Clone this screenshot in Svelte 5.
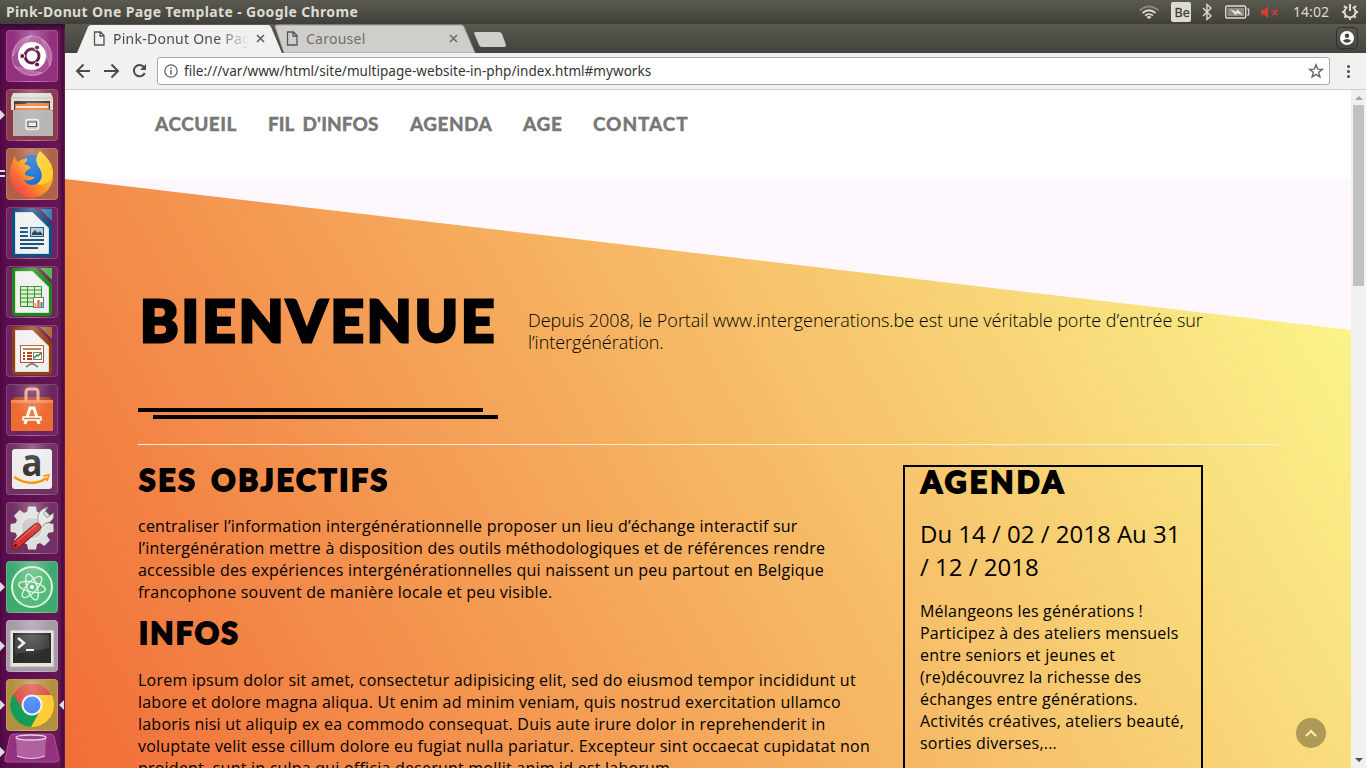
<script>
  const links = [
    { t: 'ACCUEIL', w: 83, s: 0.5 },
    { t: "FIL D'INFOS", w: 112, s: 0.05 },
    { t: 'AGENDA', w: 83, s: 0.45 },
    { t: 'AGE', w: 40, s: 0.6 },
    { t: 'CONTACT', w: 97, s: 0.9 }
  ];
  const apps = [
    { id: 'dash', bg: '#93317e' },
    { id: 'files', bg: '#8c3a4c', run: 1 },
    { id: 'firefox', bg: '#ae6248', run: 2 },
    { id: 'writer', bg: '#6b2560' },
    { id: 'calc', bg: '#6b2560' },
    { id: 'impress', bg: '#6b2560' },
    { id: 'software', bg: '#6b2560' },
    { id: 'amazon', bg: '#733062' },
    { id: 'settings', bg: '#733062' },
    { id: 'atom', bg: '#3faa70', run: 1 },
    { id: 'term', bg: '#a898a8', run: 1 },
    { id: 'chrome', bg: '#b39040', run: 1, active: true }
  ];
  const docColor = { writer: ['#0b5283', '#3285b5'], calc: ['#1c8a12', '#55b83c'], impress: ['#973d0c', '#b96a35'] };
  const teeth = [0, 45, 90, 135, 180, 225, 270, 315];
</script>

<div class="screen">
  <header class="panel">
    <span class="wtitle">Pink-Donut One Page Template - Google Chrome</span>
    <svg class="tray" width="250" height="24" viewBox="0 0 250 24">
      <g fill="none" stroke="#dfdbd2" stroke-width="1.7">
        <path d="M23.5 10.5Q33 2.500 42.500 10.500" stroke="#8b8983" /><path d="M26.500 13Q33 7.500 39.500 13" /><path d="M29 15.700Q33 12.500 37 15.700" />
      </g>
      <path d="M30.500 17Q33 15 35.500 17L33 19Z" fill="#dfdbd2" />
      <rect x="55" y="2" width="20" height="20" rx="2" fill="#dfdbd2" />
      <text x="58.500" y="17" font-size="12.500" font-family="Noto Sans" fill="#3c3b37" stroke="#3c3b37" stroke-width=".3">Be</text>
      <path d="M87 8l8 8-4 3.500v-15l4 3.500-8 8" fill="none" stroke="#dfdbd2" stroke-width="1.400" />
      <rect x="109.700" y="6" width="20" height="12" rx="1.500" fill="none" stroke="#dfdbd2" stroke-width="1.400" />
      <path d="M131 9h1.700v6H131" fill="none" stroke="#dfdbd2" stroke-width="1.200" />
      <rect x="111.500" y="8" width="16.500" height="8" fill="#8b8983" />
      <path d="M114 9l6.500 3 .5-3 6 6-6.500-2-.5 2.500z" fill="#efede8" />
      <path d="M145 10h3l4-4v12l-4-3.500h-3z" fill="#df382c" /><path d="M156.500 10l5 5m0-5l-5 5" stroke="#df382c" stroke-width="1.700" />
      <text x="177" y="17" font-size="14" font-family="Noto Sans" fill="#dfdbd2" textLength="36">14:02</text>
      <g stroke="#dfdbd2" fill="none" stroke-width="2"><path d="M231.300 7a5.600 5.600 0 1 0 5.400 0M234 4v7M226 12h2.500M239.500 12h2.500M228 6l2.200 2.200M240 6l-2.200 2.200M228.300 17.700l2-2M239.700 17.700l-2-2M234 17.500v2.500" /></g>
    </svg>
  </header>

  <div class="desktop">
    <aside class="launcher">
      {#each apps as a}
        <div class="slot">
          {#if a.run === 1}<i class="arrow"></i>{/if}
          {#if a.run === 2}<i class="bars"></i>{/if}
          <div class="tile" style="background-color:{a.bg}">
            <svg width="52" height="52" viewBox="0 0 52 52">
              {#if a.id === 'dash'}
                <g fill="#e9b6dc" fill-opacity=".22" stroke="#f0cfe8" stroke-opacity=".45" stroke-width=".8">
                  {#each [0, 120, 240] as r}<path transform="rotate({r} 26 26)" d="M7 26A19 19 0 0 1 40 12Q46 20 44 36Q40 20 30 13Q17 8 7 26Z" />{/each}
                </g>
                <circle cx="26" cy="26" r="14" fill="#fff" />
                <circle cx="26" cy="26" r="7" fill="none" stroke="#5c1045" stroke-width="3" />
                <g fill="#5c1045" stroke="#fff"><circle cx="16.300" cy="26" r="2.500" /><circle cx="31" cy="17.500" r="2.500" /><circle cx="31" cy="34.500" r="2.500" /></g>
              {:else if a.id === 'files'}
                <path d="M5 9l2-5h38l2 5v12H5z" fill="#dededc" /><path d="M5 9h42" stroke="#bbb" /><rect x="8" y="12" width="36" height="9" fill="#423c37" />
                <path d="M9 15h10l2-1h22v7H9z" fill="#e88245" /><path d="M10 18h32" stroke="#fff" stroke-width="1.500" />
                <path d="M7 21h38l2 1v25H7z" fill="#b5b5b4" /><rect x="20" y="30.500" width="12.500" height="10" rx="2" fill="#c4c4c4" stroke="#f0f0f0" stroke-width="1.500" /><rect x="22" y="33" width="8.500" height="4.500" fill="#eee" stroke="#555" />
              {:else if a.id === 'firefox'}
                <defs><linearGradient id="fo" x1="1" x2="0" y1="0" y2="1"><stop offset="0" stop-color="#ffec3d" /><stop offset=".5" stop-color="#ff9a20" /><stop offset="1" stop-color="#f0245a" /></linearGradient></defs>
                <circle cx="27" cy="25" r="18" fill="#166fd3" />
                <path d="M9 8Q4 16 4 27A21.500 21.500 0 0 0 47 29Q48 18 41 11Q37 8 34 3Q28 10 32 17Q37 22 38 28Q35 36 27 37Q20 37 18 32Q25 34 29 29Q24 29 19 27Q18 23 25 20Q23 17 18 16Q22 13 21 10Q15 11 12 14Q9 12 9 8Z" fill="url(#fo)" />
                <path d="M34 3Q28 11 32 18Q40 29 31 36Q40 39 45 30Q51 17 34 3Z" fill="#ffcf32" />
              {:else if docColor[a.id]}
                <path d="M7.500 2H30l16 16v28q0 4-4 4H10q-4 0-4-4V5q0-3 1.500-3z" fill={docColor[a.id][0]} />
                <path d="M34 2h12v12z" fill={docColor[a.id][1]} /><path d="M9.500 5.500h17L42.500 21v25.500h-33z" fill="#f0f0f0" stroke="#d5dce0" />
                {#if a.id === 'writer'}
                  <path d="M14 21h8m-8 4h8m-8 4h8m-8 4h24m-24 4h24m-24 4h18" stroke="#17517d" stroke-width="2" /><rect x="24.500" y="20.500" width="13" height="9" fill="#a5d2eb" stroke="#17517d" /><path d="M26 28v-2l3-3 3 3 2-2 3 4z" fill="#333" />
                {:else if a.id === 'calc'}
                  <path d="M14.500 20.500h21v20h-21zM14.500 24h21m-21 4h21m-21 4h21m-21 4h21M21.500 20.500v20m7-20v20" fill="#dcefd7" stroke="#249017" /><rect x="27.500" y="31.500" width="10" height="10" fill="#fff" stroke="#777" /><path d="M29.500 41v-4" stroke="#f2b01e" stroke-width="2" /><path d="M32.500 41v-7" stroke="#d9571c" stroke-width="2" /><path d="M35.500 41v-5" stroke="#2786c8" stroke-width="2" />
                {:else}
                  <rect x="14.500" y="20.500" width="23" height="17" fill="#fff" stroke="#b7501d" /><path d="M17 23h18v2H17z" fill="#d26f3b" /><path d="M17 28h2m-2 3h2m-2 3h2m2-6h5m-5 3h5m-5 3h5" stroke="#a83d14" stroke-width="2" /><rect x="27.500" y="27.500" width="8" height="7" fill="#fff" stroke="#777" /><path d="M28 33l3-3 1 1 3-3" stroke="#278b22" fill="none" stroke-width="1.500" /><path d="M26 37v3m0-2l-6 4m6-4l6 4" stroke="#888" stroke-width="2" />
                {/if}
              {:else if a.id === 'software'}
                <path d="M5 17h42v30H5z" fill="#ef6c31" /><path d="M5 17l3-4h36l3 4" fill="#b8481f" /><path d="M5 16h42v3H5z" fill="#f58a55" /><path d="M20 17V8q0-3 3-3h6q3 0 3 3v9" fill="none" stroke="#f1a583" stroke-width="3" />
                <path d="M19 40l5-16h4l5 16" fill="none" stroke="#fff" stroke-width="3" /><path d="M17 33h18v3H17z" fill="#ef6c31" stroke="#fff" stroke-width="1.500" />
              {:else if a.id === 'amazon'}
                <rect x="6" y="6" width="40" height="40" rx="3" fill="#ededed" />
                <text x="15.500" y="32.500" font-size="38" font-weight="bold" font-family="Open Sans" fill="#2b2b2b" textLength="21" lengthAdjust="spacingAndGlyphs">a</text>
                <path d="M8 34Q25 45 41 35" fill="none" stroke="#f79400" stroke-width="2.200" /><path d="M37 33l6-1-2 6" fill="none" stroke="#f79400" stroke-width="1.500" />
              {:else if a.id === 'settings'}
                {#each teeth as r}<path transform="rotate({r} 26 26)" d="M22 4.500h8l1.500 8h-11z" fill="#dedede" />{/each}
                <circle cx="26" cy="26" r="17" fill="#e0e0e0" /><circle cx="26" cy="26" r="11" fill="#c9c9c9" stroke="#f5f5f5" />
                <path d="M33 23Q29 12 37 7L42 5 37.500 11.500 41 15.500 47.500 11Q49 20 39 21.500L35 26Z" fill="#e8e8e5" stroke="#888" /><path d="M31 25L10 43" stroke="#8e1717" stroke-width="8.500" stroke-linecap="round" /><path d="M31 25L10 43" stroke="#d33232" stroke-width="6.500" stroke-linecap="round" /><path d="M30 23.500L11 39.500" stroke="#eb7770" /><circle cx="9.500" cy="43.500" r="1.500" fill="#561111" />
              {:else if a.id === 'atom'}
                <circle cx="26" cy="26" r="20" fill="#55bc79" stroke="#ddf4df" stroke-width="2" /><g fill="none" stroke="#e5f7e8" stroke-width="1.300"><ellipse cx="26" cy="26" rx="13.500" ry="5" transform="rotate(12 26 26)" /><ellipse cx="26" cy="26" rx="13.500" ry="5" transform="rotate(72 26 26)" /><ellipse cx="26" cy="26" rx="13.500" ry="5" transform="rotate(132 26 26)" /></g><circle cx="26" cy="26" r="2" fill="#fff" />
              {:else if a.id === 'term'}
                <rect x="4" y="10" width="44" height="37" rx="1" fill="#e7e7e2" stroke="#aaa" /><rect x="7" y="13" width="38" height="30" fill="#2d2d2d" /><path d="M9 15h34v13L9 34z" fill="#444" /><path d="M12 18l6 5-6 5" fill="none" stroke="#eee" stroke-width="2.600" /><path d="M20 30h8" stroke="#eee" stroke-width="2" />
              {:else}
                <circle cx="26" cy="26" r="22" fill="#fc3" /><path d="M26 26L7 15A22 22 0 0 0 25 48L34.500 31z" fill="#169b58" /><path d="M7 15A22 22 0 0 1 45.500 16H26L17 31z" fill="#dc5145" /><circle cx="26" cy="26" r="10.500" fill="#f4f4f4" /><circle cx="26" cy="26" r="8.500" fill="#4285f4" />
              {/if}
            </svg>
            <b class="shine"></b>
          </div>
          {#if a.active}<i class="arrow right"></i>{/if}
        </div>
      {/each}
      <div class="trash"><i class="arrow"></i>
        <svg width="56" height="31" viewBox="0 0 56 31"><path d="M9 1h38q2 0 3 2l5 23q0 3-3 3H3q-3 0-2-3L6 3q1-2 3-2z" fill="#93317e" stroke="#a9559a" /><path d="M12 4h30l-1 20q-14 4-28 0z" fill="#ce94bd" fill-opacity=".5" /><ellipse cx="27" cy="4.500" rx="15" ry="2.500" fill="#974484" stroke="#edcfe5" stroke-width="1.300" /><path d="M13 23q14 5 28 0" fill="none" stroke="#ebcde3" /></svg>
      </div>
    </aside>

    <section class="browser">
      <div class="tabs">
        <svg class="tabshape" width="460" height="29" viewBox="0 0 460 29"><path d="M210 2q1-1 3-1h183q2 0 3 2l11 26H219z" fill="#d0cecb" stroke="#a3a19d" /><path d="M12 29L23 3q1-2 3-2h177q2 0 3 2l11 26z" fill="#f2f1ef" /><path d="M410 8h24q2 0 3 2l4 11q0 2-2 2h-22q-2 0-3-2l-5-12z" fill="#d0cecb" /></svg>
        <div class="tab first"><svg width="12" height="15" viewBox="0 0 12 15"><path d="M1.500 1h6l3.500 3.500V14H1.500zM7 1v4h4" fill="none" stroke="#555" stroke-width="1.300" /></svg><span class="fade">Pink-Donut One Page</span><svg class="x" width="9" height="9"><path d="M1 1l7 7m0-7l-7 7" stroke="#5a5a5a" stroke-width="1.500" /></svg></div>
        <div class="tab second"><svg width="12" height="15" viewBox="0 0 12 15"><path d="M1.500 1h6l3.500 3.500V14H1.500zM7 1v4h4" fill="none" stroke="#555" stroke-width="1.300" /></svg><span>Carousel</span><svg class="x" width="9" height="9"><path d="M1 1l7 7m0-7l-7 7" stroke="#6a6a6a" stroke-width="1.500" /></svg></div>
        <div class="user"><svg width="14" height="14"><circle cx="7" cy="7" r="7" fill="#fff" /><circle cx="7" cy="4.700" r="2.200" fill="#454440" /><path d="M2.800 9.700Q7 6.500 11.200 9.700 7 14 2.800 9.700" fill="#454440" /></svg></div>
      </div>
      <div class="toolbar">
        <svg width="88" height="34" viewBox="0 0 88 34" fill="none" stroke="#4c4c4c" stroke-width="2"><path d="M25 17H12M18.500 10.500L12 17l6.500 6.500M39 17h13M46.500 10.500L53 17l-6.500 6.500" /><path d="M79 13a5.700 5.700 0 1 0 .8 6" /><path d="M81 10v6h-6z" fill="#4c4c4c" stroke="none" /></svg>
        <div class="url"><svg width="14" height="14"><circle cx="7" cy="7" r="6.200" fill="none" stroke="#666" stroke-width="1.300" /><path d="M7 6v4.500M7 3.500v1.500" stroke="#666" stroke-width="1.500" /></svg><span>file:///var/www/html/site/multipage-website-in-php/index.html#myworks</span><svg class="star" width="16" height="16" viewBox="0 0 16 16"><path d="M8 1.800l1.700 4.300 4.600.3-3.600 2.900 1.200 4.600L8 11.400l-3.900 2.500 1.200-4.600-3.600-2.900 4.600-.3z" fill="none" stroke="#666" stroke-width="1.400" /></svg></div>
        <div class="dots"><i></i><i></i><i></i></div>
      </div>

      <div class="view">
        <main class="page">
          <nav>{#each links as l}<a href="#top" style="width:{l.w}px;letter-spacing:{l.s}px">{l.t}</a>{/each}</nav>
          <div class="hero">
            <svg class="wash" width="1286" height="589" viewBox="0 0 1286 589">
              <defs><linearGradient id="sun" gradientUnits="userSpaceOnUse" x1="0" y1="560" x2="1172" y2="-102"><stop offset="0" stop-color="#f16f39" /><stop offset=".45" stop-color="#f5ac5d" /><stop offset="1" stop-color="#fbf68c" /></linearGradient></defs>
              <path d="M0 0L1286 151V589H0z" fill="url(#sun)" />
            </svg>
            <div class="content">
              <div class="intro">
                <h1>BIENVENUE</h1>
                <p>Depuis 2008, le Portail www.intergenerations.be est une véritable porte d’entrée sur<br />l’intergénération.</p>
              </div>
              <div class="rules"><i></i><i></i></div>
              <hr />
              <div class="cols">
                <article>
                  <h2 class="obj">SES OBJECTIFS</h2>
                  <p>centraliser l’information intergénérationnelle proposer un lieu d’échange interactif sur<br />l’intergénération mettre à disposition des outils méthodologiques et de références rendre<br />accessible des expériences intergénérationnelles qui naissent un peu partout en Belgique<br />francophone souvent de manière locale et peu visible.</p>
                  <h2 class="inf">INFOS</h2>
                  <p>Lorem ipsum dolor sit amet, consectetur adipisicing elit, sed do eiusmod tempor incididunt ut<br />labore et dolore magna aliqua. Ut enim ad minim veniam, quis nostrud exercitation ullamco<br />laboris nisi ut aliquip ex ea commodo consequat. Duis aute irure dolor in reprehenderit in<br />voluptate velit esse cillum dolore eu fugiat nulla pariatur. Excepteur sint occaecat cupidatat non<br />proident, sunt in culpa qui officia deserunt mollit anim id est laborum.</p>
                </article>
                <div class="agenda">
                  <h2>AGENDA</h2>
                  <h3>Du 14 / 02 / 2018 Au 31<br />/ 12 / 2018</h3>
                  <p>Mélangeons les générations !<br />Participez à des ateliers mensuels<br />entre seniors et jeunes et<br />(re)découvrez la richesse des<br />échanges entre générations.<br />Activités créatives, ateliers beauté,<br />sorties diverses,...</p>
                </div>
              </div>
            </div>
          </div>
          <div class="totop"><svg width="12" height="8"><path d="M1 7l5-5 5 5" fill="none" stroke="#fff0b0" stroke-width="2.200" /></svg></div>
        </main>
        <div class="scroll"><i class="up"></i><b></b><i class="down"></i></div>
      </div>
    </section>
  </div>
</div>

<style>
  :global(body) { margin: 0; overflow: hidden; }
  .screen { width: 1366px; height: 768px; overflow: hidden; display: flex; flex-direction: column; font-family: "Open Sans", sans-serif; }
  .screen * { box-sizing: border-box; }
  svg { display: block; flex: none; }
  .panel { height: 24px; flex: none; display: flex; justify-content: space-between; align-items: center; background: linear-gradient(#5b5a50, #403f3a); }
  .wtitle { padding-left: 6px; color: #dfdbd2; font: bold 14px/24px "Noto Sans", sans-serif; letter-spacing: .36px; white-space: nowrap; }
  .desktop { display: flex; height: 744px; }
  .launcher { width: 65px; flex: none; background: linear-gradient(90deg, #5a0b4c, #651653 60px, #4b083f 63px, #7b4070 65px); padding-top: 6px; box-shadow: inset 0 4px 5px #3a0730; }
  .slot { position: relative; height: 59px; padding-left: 6px; }
  .tile { position: relative; width: 52px; height: 52px; border-radius: 4px; overflow: hidden; }
  .shine { position: absolute; inset: 0; border-radius: 4px; border: 1px solid #ffffff28; background: radial-gradient(ellipse at 50% 0, #ffffff45, transparent 55%); }
  .arrow { position: absolute; left: 0; top: 21px; border: 5px solid transparent; border-left-color: #ddd; border-right: 0; }
  .arrow.right { left: 59px; border-left: 0; border-right: 5px solid #ddd; }
  .bars { position: absolute; left: 0; top: 22px; width: 5px; height: 7px; border-top: 2px solid #ddd; border-bottom: 2px solid #ddd; }
  .trash { position: relative; padding-left: 4px; margin-top: -5px; }
  .trash .arrow { top: 14px; }
  .browser { width: 1301px; }
  .tabs { position: relative; height: 29px; background: linear-gradient(#5b5a50, #43423c); display: flex; }
  .tabshape { position: absolute; left: 0; top: 0; }
  .tab { position: relative; display: flex; align-items: center; height: 29px; font: 14px "Noto Sans", sans-serif; color: #4c4c4c; }
  .tab span { margin-left: 8px; white-space: nowrap; overflow: hidden; letter-spacing: .25px; }
  .first { margin-left: 28px; width: 172px; }
  .second { margin-left: 21px; width: 172px; color: #6e6e6e; }
  .x { margin-left: auto; }
  .fade { width: 136px; -webkit-mask-image: linear-gradient(90deg, #000 104px, transparent 136px); mask-image: linear-gradient(90deg, #000 104px, transparent 136px); }
  .user { margin: 3px 8px 0 auto; width: 22px; height: 22px; border: 1px solid #33322e; border-radius: 4px; display: grid; place-items: center; }
  .toolbar { height: 37px; display: flex; align-items: center; background: #f2f1ef; border-bottom: 1px solid #d0cfcd; }
  .url { margin-left: 4px; width: 1173px; height: 28px; border: 1px solid #aaa9a7; border-radius: 3px; background: #fff; display: flex; align-items: center; padding: 0 5px 0 6px; font: 13.5px "Noto Sans", sans-serif; color: #333; }
  .url span { margin-left: 6px; white-space: nowrap; letter-spacing: .05px; }
  .star { margin-left: auto; }
  .dots { width: 36px; display: grid; gap: 2px; justify-items: center; }
  .dots i { width: 3px; height: 3px; border-radius: 50%; background: #4c4c4c; }
  .view { display: flex; height: 678px; }
  .page { position: relative; width: 1286px; height: 678px; overflow: hidden; background: #fff; color: #000; }
  nav { height: 89px; padding: 22px 0 0 90px; display: flex; gap: 30px; }
  nav a { color: #777; text-decoration: none; white-space: nowrap; font: 900 19px/23px Lato, sans-serif; word-spacing: 4px; -webkit-text-stroke: .3px #777; }
  .hero { position: relative; height: 589px; background: #fef8fe; }
  .wash { position: absolute; left: 0; top: 0; }
  .content { position: relative; padding: 105px 0 0 73px; }
  .intro { display: flex; height: 124px; }
  h1, h2 { font-family: Lato, sans-serif; font-weight: 900; margin: 0; white-space: nowrap; }
  h1 { width: 390px; padding-left: 2px; font-size: 58px; line-height: 72px; letter-spacing: 3.1px; -webkit-text-stroke: 3px #000; }
  .intro p { margin: 25px 0 0; font-size: 18px; line-height: 22px; font-weight: 300; white-space: nowrap; letter-spacing: -.03px; }
  .rules { height: 12px; }
  .rules i { display: block; width: 345px; height: 4px; background: #000; }
  .rules i + i { margin: 3px 0 0 15px; }
  hr { width: 1140px; height: 1px; border: 0; background: #eee; margin: 24px 0 20px; }
  .cols { display: flex; }
  article { width: 765px; }
  h2 { font-size: 30px; line-height: 28px; letter-spacing: 3.3px; -webkit-text-stroke: 1.8px #000; }
  article p, .agenda p { margin: 0; font-size: 16px; line-height: 22px; white-space: nowrap; letter-spacing: .22px; }
  article .obj { padding-left: 1px; margin-bottom: 22px; letter-spacing: 2.7px; word-spacing: 4px; }
  article .inf { padding-left: 1px; margin: 15px 0 23px; letter-spacing: 2.2px; }
  .agenda { width: 300px; height: 330px; border: 2px solid #000; padding-left: 15px; }
  .agenda h2 { padding-left: 1px; line-height: 29px; }
  h3 { margin: 21px 0 17px; font-size: 24px; line-height: 33px; font-weight: 400; white-space: nowrap; }
  .totop { position: absolute; left: 1231px; top: 628px; width: 30px; height: 30px; border-radius: 50%; background: #0000004d; display: grid; place-items: center; }
  .scroll { width: 15px; background: #f1f1f1; display: flex; flex-direction: column; align-items: center; padding: 6px 0; }
  .scroll b { width: 11px; height: 181px; background: #c1c1c1; margin-top: 5px; }
  .up { border: 4px solid transparent; border-bottom-color: #a3a3a3; border-top: 0; }
  .down { border: 4px solid transparent; border-top-color: #505050; border-bottom: 0; margin-top: auto; }
</style>
